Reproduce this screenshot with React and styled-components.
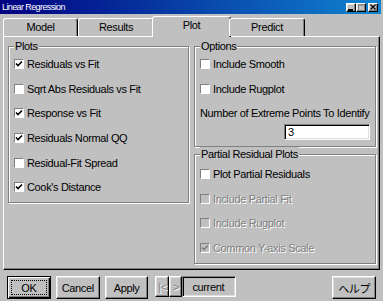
import React from 'react';
import styled, { createGlobalStyle, css } from 'styled-components';

const FONT = `"Liberation Sans", "Noto Sans CJK JP", sans-serif`;

const GlobalStyle = createGlobalStyle`
    html, body {
        margin: 0;
        padding: 0;
        background: #c0c0c0;
        overflow: hidden;
    }
    * {
        box-sizing: border-box;
    }
`;

const raised = css`
    border: 1px solid;
    border-color: #fff #000 #000 #fff;
    box-shadow: inset -1px -1px 0 #808080, inset 1px 1px 0 #dfdfdf;
`;

const sunken = css`
    border: 1px solid;
    border-color: #808080 #fff #fff #808080;
    box-shadow: inset 1px 1px 0 #000, inset -1px -1px 0 #dfdfdf;
`;

const disabledText = css`
    color: #808080;
    text-shadow: 1px 1px 0 #fff;
`;

const Window = styled.div`
    width: 383px;
    height: 301px;
    padding: 0 2px 0 0;
    background: #c0c0c0;
    font-family: ${FONT};
    font-size: 11px;
    letter-spacing: -0.35px;
    color: #000;
    display: flex;
    flex-direction: column;
`;

const TitleBar = styled.div`
    height: 14px;
    display: flex;
    align-items: center;
    justify-content: space-between;
    padding: 0 3px 0 2px;
    background: linear-gradient(to right, #000080, #1084d0);
`;

const Title = styled.span`
    color: #fff;
    font-size: 9px;
    letter-spacing: -0.6px;
    line-height: 14px;
`;

const Controls = styled.div`
    display: flex;
    align-items: center;
`;

const CtrlBtn = styled.div`
    ${raised};
    width: 10px;
    height: 9px;
    background: #c0c0c0;
    display: flex;
    align-items: center;
    justify-content: center;
    margin-left: ${p => (p.$gap ? '2px' : '0')};
    svg {
        display: block;
    }
`;

const Body = styled.div`
    flex: 1;
    padding-left: 3px;
    display: flex;
    flex-direction: column;
`;

const TabStrip = styled.div`
    height: 21px;
    margin-top: 1px;
    display: flex;
    align-items: flex-end;
    position: relative;
    z-index: 1;
`;

const Tab = styled.div`
    width: ${p => p.$w}px;
    height: 18px;
    border: 1px solid;
    border-bottom: none;
    border-color: #fff #000 transparent #fff;
    border-radius: 3px 3px 0 0;
    box-shadow: inset -1px 0 0 #808080;
    background: #c0c0c0;
    display: flex;
    align-items: center;
    justify-content: center;
    padding-bottom: 2px;

    ${p => p.$active && css`
        height: 21px;
        width: ${p.$w + 4}px;
        margin: 0 -2px -1px;
        padding-bottom: 4px;
    `}
`;

const TabPanel = styled.div`
    width: 377px;
    height: 234px;
    border: 1px solid;
    border-color: #fff #000 #000 #fff;
    box-shadow: inset -1px -1px 0 #808080;
    padding: 9px 2px 0 4px;
    display: flex;
    gap: 5px;
`;

const Column = styled.div`
    width: ${p => p.$w}px;
    display: flex;
    flex-direction: column;
    gap: 7px;
`;

const GroupBox = styled.div`
    position: relative;
    height: ${p => p.$h}px;
    border: 1px solid #808080;
    box-shadow: 1px 1px 0 #fff, inset 1px 1px 0 #fff;
    padding: ${p => p.$pt}px 4px 0 5px;
`;

const Legend = styled.span`
    position: absolute;
    top: -8px;
    left: 5px;
    padding: 0 1px;
    background: #c0c0c0;
    line-height: 14px;
`;

const Row = styled.div`
    height: ${p => p.$h || 24.6}px;
    display: flex;
    align-items: center;
    gap: 3px;
    ${p => p.$disabled && disabledText};
`;

const Box = styled.span`
    width: 10px;
    height: 10px;
    border: 1px solid;
    border-color: #808080 #fff #fff #808080;
    background: ${p => (p.$disabled ? '#c0c0c0' : '#fff')};
    display: flex;
    align-items: center;
    justify-content: center;
    flex: none;
    svg {
        display: block;
    }
`;

const NumberInput = styled.div`
    ${sunken};
    width: 86px;
    height: 16px;
    margin-left: auto;
    margin-right: 1px;
    background: #fff;
    padding: 0 3px;
    line-height: 14px;
`;

const ButtonBar = styled.div`
    width: 377px;
    display: flex;
    align-items: flex-start;
    padding: 6px 4px 0 4px;
`;

const Button = styled.div`
    ${raised};
    width: ${p => p.$w || 44}px;
    height: ${p => p.$h || 23}px;
    margin-left: ${p => p.$ml || 0}px;
    display: flex;
    align-items: center;
    justify-content: center;
    background: #c0c0c0;
    position: relative;
    ${p => p.$disabled && disabledText};

    ${p => p.$default && css`
        border: 1px solid #000;
        box-shadow: inset 1px 1px 0 #fff, inset -1px -1px 0 #000, inset -2px -2px 0 #808080;
        &::after {
            content: '';
            position: absolute;
            inset: 3px;
            border: 1px dotted #000;
        }
    `}
`;

const CurrentField = styled.div`
    ${sunken};
    width: 54px;
    height: 21px;
    padding-left: 9px;
    display: flex;
    align-items: center;
`;

function Check({ disabled }) {
    return (
        <svg width="8" height="8" viewBox="0 0 8 8">
            <path d="M1 3.5 L3 5.5 L7 1.5" fill="none" stroke={disabled ? '#808080' : '#000'} strokeWidth="1.6" />
        </svg>
    );
}

function CheckRow({ label, checked, disabled, h }) {
    return (
        <Row $disabled={disabled} $h={h}>
            <Box $disabled={disabled}>{checked && <Check disabled={disabled} />}</Box>
            <span>{label}</span>
        </Row>
    );
}

const plots = [
    ['Residuals vs Fit', true],
    ['Sqrt Abs Residuals vs Fit', false],
    ['Response vs Fit', true],
    ['Residuals Normal QQ', true],
    ['Residual-Fit Spread', false],
    ["Cook's Distance", true],
];

export default function App() {
    return (
        <>
            <GlobalStyle />
            <Window>
                <TitleBar>
                    <Title>Linear Regression</Title>
                    <Controls>
                        <CtrlBtn>
                            <svg width="6" height="7" viewBox="0 0 6 7"><rect x="0" y="5" width="5" height="2" fill="#000" /></svg>
                        </CtrlBtn>
                        <CtrlBtn>
                            <svg width="7" height="7" viewBox="0 0 7 7"><rect x="0.5" y="0.5" width="6" height="6" fill="none" stroke="#808080" /><rect x="0" y="0" width="7" height="1.5" fill="#808080" /></svg>
                        </CtrlBtn>
                        <CtrlBtn $gap>
                            <svg width="6" height="6" viewBox="0 0 6 6"><path d="M0.5 0.5 L5.5 5.5 M5.5 0.5 L0.5 5.5" stroke="#000" strokeWidth="1.4" /></svg>
                        </CtrlBtn>
                    </Controls>
                </TitleBar>
                <Body>
                    <TabStrip>
                        <Tab $w={75}>Model</Tab>
                        <Tab $w={76}>Results</Tab>
                        <Tab $w={75} $active>Plot</Tab>
                        <Tab $w={76}>Predict</Tab>
                    </TabStrip>
                    <TabPanel>
                        <Column $w={181}>
                            <GroupBox $h={157} $pt={5}>
                                <Legend>Plots</Legend>
                                {plots.map(([label, checked]) => (
                                    <CheckRow key={label} label={label} checked={checked} />
                                ))}
                            </GroupBox>
                        </Column>
                        <Column $w={182}>
                            <GroupBox $h={101} $pt={5}>
                                <Legend>Options</Legend>
                                <CheckRow label="Include Smooth" />
                                <CheckRow label="Include Rugplot" />
                                <Row $h={23}>Number of Extreme Points To Identify</Row>
                                <NumberInput>3</NumberInput>
                            </GroupBox>
                            <GroupBox $h={110} $pt={7}>
                                <Legend>Partial Residual Plots</Legend>
                                <CheckRow label="Plot Partial Residuals" />
                                <CheckRow label="Include Partial Fit" disabled />
                                <CheckRow label="Include Rugplot" disabled />
                                <CheckRow label="Common Y-axis Scale" checked disabled />
                            </GroupBox>
                        </Column>
                    </TabPanel>
                    <ButtonBar>
                        <Button $default>OK</Button>
                        <Button $ml={5}>Cancel</Button>
                        <Button $ml={5}>Apply</Button>
                        <Button $ml={7} $w={14} $h={21} $disabled>|&lt;</Button>
                        <Button $w={13} $h={21} $disabled>&gt;</Button>
                        <CurrentField>current</CurrentField>
                        <Button $ml={96}>ヘルプ</Button>
                    </ButtonBar>
                </Body>
            </Window>
        </>
    );
}
